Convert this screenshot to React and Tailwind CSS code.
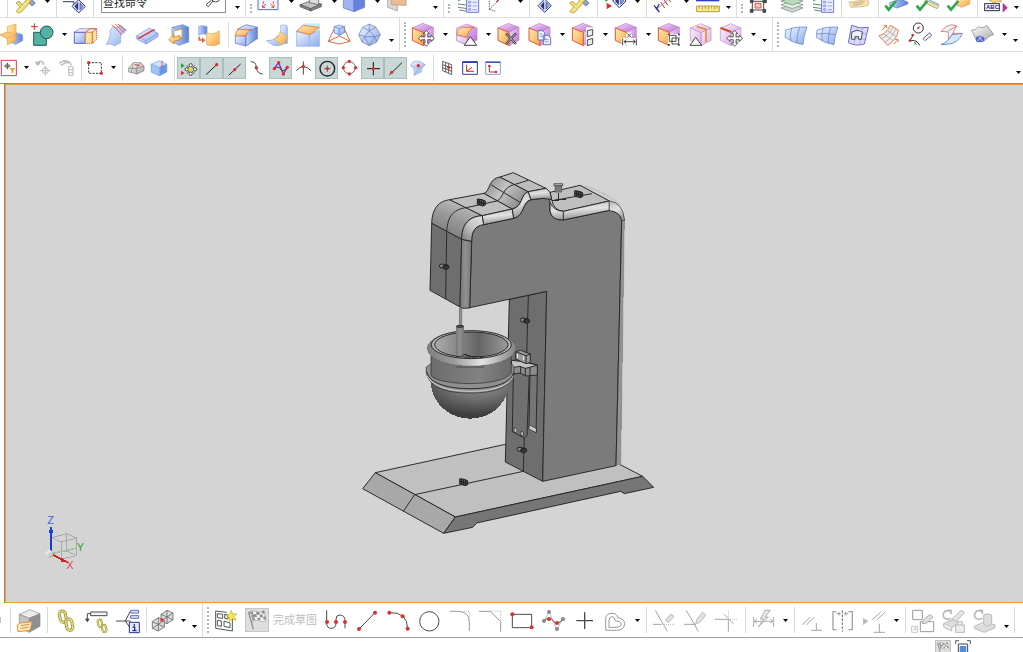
// App.jsx
const DARK = '#2b2b2b';
const ICON = '#4a4a4a';
const FADED = '#b9b9b9';

/* ---------- shared gradients ---------- */

function Gradients() {
  return (
    <svg className="absolute" width="0" height="0" aria-hidden="true">
      <defs>
        <linearGradient id="blue" x1="0" y1="0" x2="1" y2="1">
          <stop offset="0" stopColor="#eef5ff" />
          <stop offset="1" stopColor="#90abea" />
        </linearGradient>
        <linearGradient id="deep" x1="0" y1="0" x2="1" y2="0">
          <stop offset="0" stopColor="#c3d8fa" />
          <stop offset="1" stopColor="#5f7fd8" />
        </linearGradient>
        <linearGradient id="orange" x1="0" y1="0" x2="1" y2="1">
          <stop offset="0" stopColor="#ffeeb4" />
          <stop offset="1" stopColor="#f4a548" />
        </linearGradient>
        <linearGradient id="lilac" x1="0" y1="0" x2="1" y2="1">
          <stop offset="0" stopColor="#f6e2fb" />
          <stop offset="1" stopColor="#b468d4" />
        </linearGradient>
        <linearGradient id="pale" x1="0" y1="0" x2="1" y2="1">
          <stop offset="0" stopColor="#fbeefb" />
          <stop offset="1" stopColor="#d9b3e2" />
        </linearGradient>
        <linearGradient id="silver" x1="0" y1="0" x2="1" y2="1">
          <stop offset="0" stopColor="#ffffff" />
          <stop offset="1" stopColor="#a6a6a6" />
        </linearGradient>
        <linearGradient id="head" x1="0" y1="1" x2="0.5" y2="0">
          <stop offset="0" stopColor="#727272" />
          <stop offset="0.6" stopColor="#989898" />
          <stop offset="1" stopColor="#bdbdbd" />
        </linearGradient>
        <linearGradient id="fillet" x1="0" y1="0" x2="0.2" y2="1">
          <stop offset="0" stopColor="#b8b8b8" />
          <stop offset="0.5" stopColor="#e2e2e2" />
          <stop offset="1" stopColor="#979797" />
        </linearGradient>
        <linearGradient id="corner" x1="0" y1="1" x2="0.8" y2="0">
          <stop offset="0" stopColor="#7c7c7c" />
          <stop offset="0.55" stopColor="#c2c2c2" />
          <stop offset="1" stopColor="#e0e0e0" />
        </linearGradient>
        <linearGradient id="edge" x1="0" y1="0" x2="1" y2="0">
          <stop offset="0" stopColor="#7a7a7a" />
          <stop offset="0.5" stopColor="#909090" />
          <stop offset="1" stopColor="#777777" />
        </linearGradient>
        <linearGradient id="rise" x1="0" y1="0" x2="1" y2="0.6">
          <stop offset="0" stopColor="#7d7d7d" />
          <stop offset="0.5" stopColor="#c4c4c4" />
          <stop offset="1" stopColor="#8a8a8a" />
        </linearGradient>
        <linearGradient id="rim" x1="0" y1="0" x2="1" y2="0">
          <stop offset="0" stopColor="#7e7e7e" />
          <stop offset="0.3" stopColor="#9c9c9c" />
          <stop offset="0.62" stopColor="#e4e4e4" />
          <stop offset="1" stopColor="#858585" />
        </linearGradient>
        <linearGradient id="inside" x1="0" y1="0" x2="1" y2="0">
          <stop offset="0" stopColor="#aaaaaa" />
          <stop offset="0.3" stopColor="#8a8a8a" />
          <stop offset="0.6" stopColor="#646464" />
          <stop offset="1" stopColor="#9a9a9a" />
        </linearGradient>
        <linearGradient id="wall" x1="0" y1="0" x2="1" y2="0">
          <stop offset="0" stopColor="#6c6c6c" />
          <stop offset="0.6" stopColor="#828282" />
          <stop offset="1" stopColor="#6a6a6a" />
        </linearGradient>
        <radialGradient id="bowl" cx="0.6" cy="0.1" r="0.9">
          <stop offset="0" stopColor="#949494" />
          <stop offset="0.45" stopColor="#707070" />
          <stop offset="0.9" stopColor="#3e3e3e" />
        </radialGradient>
      </defs>
    </svg>
  );
}

/* ---------- toolbar parts ---------- */

// art is drawn on a grid of three units to the pixel
function Tool({ label, x, y, children }) {
  return (
    <button type="button" title={label} aria-label={label} className="block w-[31px] shrink-0 hover:bg-gray-100">
      <svg width="31" height="33" viewBox={`${x} ${y} 93 99`} fill="none" strokeWidth="3" stroke={ICON}>
        {children}
      </svg>
    </button>
  );
}

function NarrowTool({ label, x, y, children }) {
  return (
    <button type="button" title={label} aria-label={label} className="block w-7 shrink-0 hover:bg-gray-100">
      <svg width="28" height="33" viewBox={`${x} ${y} 84 99`} fill="none" strokeWidth="3" stroke={ICON}>
        {children}
      </svg>
    </button>
  );
}

function CutTool({ label, x, children }) {
  return (
    <button type="button" title={label} aria-label={label} className="block w-[31px] shrink-0">
      <svg width="31" height="17" viewBox={`${x} 0 93 51`} fill="none" strokeWidth="3" stroke={ICON}>
        {children}
      </svg>
    </button>
  );
}

function SnapTool({ label, x, on, children }) {
  return (
    <button
      type="button"
      title={label}
      aria-label={label}
      aria-pressed={!!on}
      className={on ? 'block w-[23px] shrink-0 bg-[#c9d8d6] ring-1 ring-inset ring-[#a9bfbc]' : 'block w-[23px] shrink-0'}
    >
      <svg width="23" height="22" viewBox={`${x} 171 69 66`} fill="none" strokeWidth="3" stroke={ICON}>
        {children}
      </svg>
    </button>
  );
}

function Triangle() {
  return (
    <svg width="5" height="3" viewBox="0 0 5 3">
      <path d="M0 0H5L2.5 3Z" fill="#000" />
    </svg>
  );
}

function Caret({ top }) {
  return (
    <button
      type="button"
      aria-label="More"
      className={top ? 'flex w-3 shrink-0 justify-center self-start' : 'flex w-3 shrink-0 justify-center'}
    >
      <Triangle />
    </button>
  );
}

function LowCaret({ className = 'pt-3' }) {
  return (
    <button type="button" aria-label="Toolbar options" className={`flex w-[10px] shrink-0 justify-center ${className}`}>
      <Triangle />
    </button>
  );
}

function Sep() {
  return (
    <span className="flex h-full max-h-[26px] w-1.5 shrink-0 justify-center">
      <span className="w-px bg-[#d9d9d9]" />
    </span>
  );
}

function Grip() {
  return (
    <span className="flex w-3 shrink-0 items-center gap-1 self-stretch pl-[3px]">
      <span className="w-px self-stretch bg-[#dcdcdc]" />
      <span className="my-1 w-0 self-stretch border-l-2 border-dotted border-[#b5b5b5]" />
    </span>
  );
}

/* ---------- reusable drawings ---------- */

function Dot({ x, y, r = 6 }) {
  return <circle cx={x} cy={y} r={r} fill="#d93030" stroke="none" />;
}

function PurpleCube({ x }) {
  return (
    <g transform={`translate(${x} 0)`} stroke="#c877c4" strokeWidth="2">
      <path d="M0 84 31 70 63 82 33 97Z" fill="url(#lilac)" />
      <path d="M33 97 63 82V121L33 137Z" fill="url(#lilac)" />
      <path d="M0 84 33 97V137L0 121Z" fill="url(#orange)" stroke="#e8553a" strokeWidth="3" />
    </g>
  );
}

function PaleCube({ x }) {
  return (
    <g transform={`translate(${x} 0)`} stroke="#b98cc9" strokeWidth="2">
      <path d="M0 84 31 71 62 84 32 98Z" fill="url(#pale)" />
      <path d="M32 98 62 84V121L32 137Z" fill="url(#pale)" />
      <path d="M0 84 32 98V137L0 121Z" fill="url(#pale)" />
    </g>
  );
}

function MoveArrows({ x, y }) {
  return (
    <path
      transform={`translate(${x} ${y})`}
      d="M0-24 9-14H4V-4H14V-9L24 0 14 9V4H4V14H9L0 24-9 14H-4V4H-14V9L-24 0-14-9V-4H-4V-14H-9Z"
      fill="#fff"
      stroke="#444"
      strokeWidth="2.5"
    />
  );
}

function Check({ x }) {
  return <path d={`M${x} 17 ${x + 10} 29 ${x + 32} 3`} stroke="#2fa84c" strokeWidth="8" />;
}

function Diamond({ x, y }) {
  return (
    <g transform={`translate(${x} ${y})`} stroke="#28357f">
      <path d="M-20 0 0-20 20 0 0 20Z" fill="#dfe6fb" />
      <path d="M-2-12V12L-12 0Z" fill="#28357f" strokeWidth="1" />
      <path d="M4-10 13 0 4 10Z" fill="#8ea5e5" strokeWidth="2" />
    </g>
  );
}

function Spanner({ x }) {
  return (
    <g transform={`translate(${x} 0)`}>
      <path d="M26-4 48 18 58 10 44-6Z" fill="#8ea2cf" stroke="#4c5f93" strokeWidth="2" />
      <path d="M0 34 26 6 34-6 50-6 36 14 14 38 5 38Z" fill="#f1dc70" stroke="#a8902d" strokeWidth="2" />
      <path d="M0 8 10 4 22 18 14 24Z" fill="#f1dc70" stroke="#a8902d" strokeWidth="2" />
      <path d="M8 32 32 6" stroke="#fdf5bf" strokeWidth="3" />
    </g>
  );
}

function ListPage({ x }) {
  return (
    <g transform={`translate(${x} 0)`}>
      <path d="M0 2 16-4 30 2M0 12 30 16M0 22 30 26M4 30 28 34" stroke="#6c8276" />
      <path d="M26-4H62V37H26Z" fill="#e9edff" stroke="#6a78d8" />
      <path d="M32 4H38V9H32ZM32 15H38V20H32ZM32 26H38V31H32ZM44 7H57M44 18H57M44 29H57" stroke="#6a78d8" strokeWidth="2" />
    </g>
  );
}

function Chain({ x, y, s = 1 }) {
  return (
    <g transform={`translate(${x} ${y}) scale(${s})`}>
      <rect x="-16" y="-30" width="18" height="34" rx="9" transform="rotate(-12)" stroke="#8c8230" strokeWidth="9" />
      <rect x="-16" y="-30" width="18" height="34" rx="9" transform="rotate(-12)" stroke="#e3da77" strokeWidth="5" />
      <rect x="-2" y="-2" width="18" height="34" rx="9" transform="rotate(-12)" stroke="#8c8230" strokeWidth="9" />
      <rect x="-2" y="-2" width="18" height="34" rx="9" transform="rotate(-12)" stroke="#e3da77" strokeWidth="5" />
    </g>
  );
}

function WireCube({ x, y }) {
  return (
    <g transform={`translate(${x} ${y})`} stroke="#6a6a6a" strokeWidth="2.5">
      <path d="M0 12 18 0 36 8V28L18 40 0 32Z" fill="#dcdcdc" />
      <path d="M0 12 18 20 36 8M18 20V40M18 0V20L0 32M18 20 36 28" />
    </g>
  );
}

function CheckeredFlag({ x, y }) {
  return (
    <g transform={`translate(${x} ${y})`} stroke="none">
      <path d="M0 4Q12-4 22 3T46 0L52 30Q40 36 30 30T8 34Z" fill="#f6f6f6" stroke="#9b9b9b" strokeWidth="2" />
      <path
        d="M4 5 12 1 14 9 6 12ZM22 3 32 5 33 13 24 12ZM40 2 46 0 48 8 41 10ZM14 10 23 11 25 20 16 18ZM33 13 41 10 43 19 35 21ZM8 14 14 11 16 19 9 21ZM25 21 34 21 36 29 28 27ZM43 19 50 17 52 25 45 27ZM10 22 17 19 19 28 12 30Z"
        fill="#8d8d8d"
      />
      <path d="M0 4 14 56" stroke="#8d8d8d" strokeWidth="4" />
    </g>
  );
}

/* ---------- top rows ---------- */

function MenuRow() {
  return (
    <div className="flex h-[18px] items-end overflow-hidden border-b border-[#dedede] pl-1">
      <Sep />
      <CutTool label="Customize" x={30}><Spanner x={48} /></CutTool>
      <Caret top />
      <Sep />
      <CutTool label="Repeat Command" x={177}>
        <path d="M189 5H222V22" stroke="#28357f" />
        <Diamond x={236} y={19} />
      </CutTool>
      <Sep />
      <div className="relative mb-1.5 ml-[5px] h-[22px] w-[125px] shrink-0">
        <input
          aria-label="查找命令"
          defaultValue="查找命令"
          className="h-full w-full border border-[#8c8c8c] bg-white pl-px text-[11px] text-[#222] outline-none font-['Noto_Sans_CJK_SC',sans-serif]"
        />
        <svg className="absolute right-1 bottom-0.5" width="17" height="17" viewBox="0 0 51 51" fill="none" stroke={ICON} strokeWidth="3">
          <circle cx="32" cy="18" r="12" />
          <path d="M24 27 10 44 3 38 20 24" />
        </svg>
      </div>
      <LowCaret className="ml-1.5 pb-2" />
      <Grip />
      <CutTool label="Fit" x={12}>
        <path d="M24-20H84V29H24Z" fill="#f2f5ff" stroke="#5a6ec6" />
        <path d="M48 12 38 22M38 14V22H46M62 12 72 22M72 14V22H64M40 4V11M70 4V11" stroke="#e04a2a" strokeWidth="3" />
      </CutTool>
      <Caret top />
      <CutTool label="Shade" x={141}>
        <path d="M150 14 180 4 214 12 182 26Z" fill="#c4c4c4" strokeWidth="2" />
        <path d="M150 14 182 26V33L150 20ZM182 26 214 12V20L182 33Z" fill="#888" strokeWidth="2" />
        <path d="M178-10V8L206 14V-10Z" fill="#dcdcdc" strokeWidth="2" />
      </CutTool>
      <Caret top />
      <CutTool label="View Section" x={270}>
        <path d="M280-10H312V35L280 24Z" fill="#9fb4f0" stroke="#5e74cc" strokeWidth="2" />
        <path d="M312-10H344V22L312 35Z" fill="#6782dc" stroke="#5e74cc" strokeWidth="2" />
      </CutTool>
      <Caret top />
      <CutTool label="Clip Plane" x={399}>
        <path d="M413-10V22L442 33V-10Z" fill="#d8d8d8" stroke="#b0b0b0" />
        <path d="M424-10V14L468 16V-10Z" fill="#e9bd94" stroke="#d0a075" />
      </CutTool>
      <LowCaret className="ml-4 pb-2" />
      <Grip />
      <CutTool label="Layer Settings" x={606}><ListPage x={624} /></CutTool>
      <CutTool label="WCS" x={699}>
        <path d="M718 28V-4M718 28 744 2M718 28 736 34" stroke="#777" strokeDasharray="5 2" />
        <path d="M740 6 748-4" stroke="#cf2c2c" strokeWidth="4" />
      </CutTool>
      <Caret top />
      <Sep />
      <CutTool label="Edit Object" x={66}><Diamond x={104} y={17} /></CutTool>
      <CutTool label="Preferences" x={159}><Spanner x={179} /></CutTool>
      <Sep />
      <CutTool label="Play" x={270}>
        <path d="M290 8V28L306 18Z" fill="#d93030" stroke="none" />
        <path d="M286-8V6L298-2Z" fill="#2fa84c" stroke="none" />
        <Diamond x={328} y={3} />
      </CutTool>
      <Caret top />
      <Sep />
      <CutTool label="Measure Distance" x={417}>
        <path d="M440 28 482-8" stroke="#999" />
        <path d="M432 16 448 36M448 12 438 28" stroke="#28357f" strokeWidth="4" />
        <path d="M452 6 464 24M462 0 474 16M472-8 482 6" stroke="#d93030" />
      </CutTool>
      <Caret top />
      <CutTool label="Ruler" x={546}>
        <path d="M558 2H628" stroke="#2b3fc0" strokeWidth="4" />
        <path d="M560 18H628V35H560Z" fill="#fbe98d" stroke="#b89b3a" />
        <path d="M568 20V26M577 20V29M586 20V26M595 20V29M604 20V26M613 20V29M621 20V26" stroke="#8a742a" strokeWidth="2" />
      </CutTool>
      <LowCaret className="pb-2" />
      <Grip />
      <CutTool label="Show and Hide" x={-54}>
        <path d="M-32 4H2V30H-32Z" />
        <path d="M-24 10H-6V24H-24Z" fill="#f9c7b4" stroke="#d9563a" />
        <path d="M-38 28H-30V37H-38ZM0 28H8V37H0ZM0 0H10V8H0ZM-38 0H-30V8H-38Z" fill={ICON} />
      </CutTool>
      <CutTool label="Layers" x={39}>
        <g stroke="#6c8276" strokeWidth="2">
          <path d="M54 24 88 14 120 24 88 37Z" fill="#cfd8d2" />
          <path d="M54 14 88 4 120 14 88 26Z" fill="#e6ece8" />
          <path d="M54 3 88-7 120 3 88 15Z" fill="#b7dcb9" />
        </g>
      </CutTool>
      <CutTool label="Layer Category" x={132}><ListPage x={150} /></CutTool>
      <Sep />
      <CutTool label="Note" x={243}>
        <path d="M258 6 314-2 318 14 300 20 264 22Z" fill="#f8e5ae" stroke="#c5b070" strokeWidth="2" />
        <path d="M268 10 304 5M270 16 300 11" stroke="#a88" strokeWidth="2" />
      </CutTool>
      <Sep />
      <CutTool label="Check Part" x={354}>
        <path d="M380 8 412-2 434 6V12L402 24 380 16Z" fill="url(#deep)" stroke="#4f6fc8" strokeWidth="2" />
        <Check x={367} />
      </CutTool>
      <CutTool label="Check Curve" x={447}>
        <path d="M488 0 528 18 522 26 484 8Z" fill="#f4e29c" stroke="#8f8f6a" strokeWidth="2" />
        <path d="M490-4 528 14" stroke="#4aa5c8" />
        <Check x={461} />
      </CutTool>
      <CutTool label="Check Body" x={540}>
        <path d="M582-8H620V12L596 22 582 16Z" fill="url(#orange)" stroke="#d39a3a" strokeWidth="2" />
        <Check x={554} />
      </CutTool>
      <Sep />
      <CutTool label="PMI Text" x={651}>
        <path d="M678 0 706-4 716 4 690 8Z" fill="#f5d77d" stroke="#b29a55" strokeWidth="2" />
        <rect x="665" y="11" width="44" height="21" fill="#fff" stroke="#28285a" />
        <text x="669" y="28" fontSize="18" fontWeight="700" fill="#28285a" stroke="none" fontFamily="Liberation Sans, sans-serif">ABC</text>
        <path d="M719 8V38L734 23Z" fill="#b4339c" stroke="none" />
      </CutTool>
      <LowCaret className="pb-2" />
    </div>
  );
}

function FeatureRow() {
  return (
    <div className="-ml-1 flex h-[34px] items-center overflow-hidden border-b border-[#dedede]">
      <Tool label="Datum Plane" x={-12} y={54}>
        <path d="M30 104 50 98 68 104V122L46 134 30 124Z" fill="url(#deep)" stroke="#7fa4e6" strokeWidth="2" />
        <path d="M22 80 48 72V122L22 134Z" fill="url(#orange)" stroke="#e69a48" strokeWidth="2" />
        <path d="M-2 104 24 96 46 104 20 116Z" fill="#fbc978" stroke="#e69a48" strokeWidth="2" />
      </Tool>
      <Tool label="Sketch" x={81} y={54}>
        <path d="M101 97H139V136H101Z" fill="#52b3a4" stroke="#245c54" />
        <circle cx="140" cy="97" r="19" fill="#52b3a4" stroke="#245c54" />
        <path d="M103 70V90M93 80H113" stroke="#d93030" />
      </Tool>
      <Caret />
      <Tool label="Extrude" x={210} y={54}>
        <path d="M223 97 238 86H290L276 97Z" fill="#f7e8e8" stroke="#6a78d8" strokeWidth="2" />
        <path d="M223 97H256V130H223Z" fill="url(#blue)" stroke="#5a62e0" />
        <path d="M256 97H277V130H256ZM277 97 290 86V118L277 130Z" fill="#fbe3a0" stroke="#e0653e" strokeDasharray="4 2" />
        <path d="M256 97 270 86H290" stroke="#e0653e" />
      </Tool>
      <Tool label="Swept Surface" x={303} y={54}>
        <path d="M338 80Q352 88 362 76L380 90Q356 100 362 128L342 138Q336 128 318 134 334 110 330 92Z" fill="url(#blue)" stroke="#86a2dc" strokeWidth="2" />
        <path d="M336 74 366 104M346 72 374 100M354 72 376 92" stroke="#d93030" strokeWidth="2.5" />
      </Tool>
      <Tool label="Trim Body" x={396} y={54}>
        <path d="M409 108 448 84 474 100V110L438 132 409 116Z" fill="url(#blue)" stroke="#6f8be4" strokeWidth="2" />
        <path d="M409 108 438 122 474 100M438 122V132" stroke="#6f8be4" strokeWidth="2" />
        <path d="M414 116 464 88" stroke="#d93030" strokeWidth="4" />
      </Tool>
      <Tool label="Boolean" x={489} y={54}>
        <path d="M516 82 548 74 566 82V126L536 136 516 124Z" fill="url(#deep)" stroke="#5f86c4" strokeWidth="2" />
        <path d="M516 82 540 90 566 82" stroke="#5f86c4" strokeWidth="2" />
        <path d="M522 92 546 88V112L522 118Z" fill="#fff" stroke="#e0a43a" />
        <path d="M506 120 520 104V112L540 106V120L522 124V132Z" fill="url(#orange)" stroke="#c9762a" strokeWidth="2" />
      </Tool>
      <Tool label="Move Face" x={582} y={54}>
        <path d="M596 80Q608 74 621 80V104Q608 98 596 106Z" fill="url(#deep)" stroke="#7a9be0" strokeWidth="2" />
        <path d="M620 98Q640 106 658 92V132Q640 142 620 134Z" fill="url(#orange)" stroke="#e5a558" strokeWidth="2" />
        <path d="M598 110V120H608" stroke="#e0653e" strokeWidth="5" />
        <path d="M606 112 616 121 606 130Z" fill="#e0653e" stroke="none" />
      </Tool>
      <Sep />
      <Tool label="Edge Blend" x={693} y={54}>
        <path d="M706 106 738 108V138L706 130Z" fill="url(#blue)" stroke="#5568d2" strokeWidth="2" />
        <path d="M738 104 772 82V116L738 138Z" fill="url(#deep)" stroke="#5568d2" strokeWidth="2" />
        <path d="M712 88 738 74 772 82 745 94Z" fill="url(#blue)" stroke="#5568d2" strokeWidth="2" />
        <path d="M706 108Q708 90 718 88L756 90Q740 92 738 108Z" fill="url(#orange)" stroke="#d9563a" strokeWidth="2" />
      </Tool>
      <Tool label="Bend" x={36} y={54}>
        <path d="M92 76Q114 72 112 84V130H104Q108 104 92 100Z" fill="url(#blue)" stroke="#86a2dc" strokeWidth="2" />
        <path d="M50 122Q76 122 82 106L110 128Q90 140 70 136Z" fill="url(#blue)" stroke="#86a2dc" strokeWidth="2" />
        <path d="M72 118Q86 116 90 96L112 108Q108 130 94 134Z" fill="url(#orange)" stroke="#e5a558" strokeWidth="2" />
      </Tool>
      <Tool label="Draft" x={129} y={54}>
        <path d="M138 70H210V138H138Z" fill="#c8eef5" stroke="none" />
        <path d="M138 70H160L140 92H138Z" fill="#fff" stroke="none" />
        <path d="M140 94 178 104V139H140ZM178 104 208 92V139H178Z" fill="url(#blue)" stroke="#9ab2e8" strokeWidth="2" />
        <path d="M140 94 160 76 208 82 180 104Z" fill="url(#orange)" stroke="#e06040" strokeWidth="2" />
      </Tool>
      <Tool label="Shell" x={222} y={54}>
        <path d="M235 124 254 84M300 124 282 84M235 124 268 108 300 124 268 132Z" stroke="#e0653e" />
        <path d="M252 80 268 75 284 80V98L268 106 252 98Z" fill="url(#blue)" stroke="#4c74c8" strokeWidth="2" />
        <path d="M252 80 268 86 284 80M268 86V106" stroke="#4c74c8" strokeWidth="2" />
      </Tool>
      <Tool label="Facet Body" x={315} y={54}>
        <path d="M358 72 378 82 391 104 380 126 358 137 336 126 326 104 338 82Z" fill="url(#blue)" stroke="#6079b8" strokeWidth="2" />
        <path d="M358 72V92M338 82 358 92 378 82M326 104 344 110 358 92 374 110 391 104M344 110 358 137 374 110ZM336 126 344 110M380 126 374 110" stroke="#6079b8" strokeWidth="2" />
      </Tool>
      <LowCaret />
      <Grip />
      <Tool label="Move Region" x={474} y={54}><PurpleCube x={487} /><MoveArrows x={529} y={115} /></Tool>
      <Caret />
      <Tool label="Offset Region" x={603} y={54}>
        <path d="M620 84 650 72 681 84V120L652 136 620 122Z" fill="url(#lilac)" stroke="#c877c4" strokeWidth="2" />
        <path d="M620 104Q622 84 640 82L672 82Q656 88 652 108V112Z" fill="url(#orange)" stroke="#d9563a" strokeWidth="2" />
        <path d="M620 106 652 114V136L620 122Z" fill="url(#pale)" stroke="#b98cc9" strokeWidth="2" />
        <path d="M661 110 680 136H643Z" fill="#fff" stroke="#444" />
      </Tool>
      <Caret />
      <Tool label="Delete Face" x={-48} y={54}>
        <PurpleCube x={-36} />
        <path d="M-12 100 18 132M18 100-12 132" stroke="#444" strokeWidth="7" />
        <path d="M-11 101 17 131M17 101-11 131" stroke="#eee" strokeWidth="2" />
      </Tool>
      <Tool label="Copy Face" x={45} y={54}>
        <PurpleCube x={57} />
        <path d="M84 92H98L104 98V120H84ZM100 106H114L122 113V134H100Z" fill="#eef1ff" stroke="#6079b8" />
        <path d="M89 102H98M89 109H98M105 118H116M105 125H116" stroke="#6079b8" strokeWidth="2" />
      </Tool>
      <Caret />
      <Tool label="Resize Face" x={174} y={54}>
        <PurpleCube x={187} />
        <path d="M228 82H256V140H228Z" fill="#fff" stroke="none" />
        <path d="M232 92 248 88V106L232 110ZM232 120 248 115V132L232 137Z" fill="#e6f1ea" />
      </Tool>
      <Caret />
      <Tool label="Linear Dimension" x={303} y={54}>
        <PurpleCube x={316} />
        <path d="M334 114H384V137H334Z" fill="#fff" stroke="none" />
        <path d="M348 98H366V114H348Z" fill="#fff" stroke="none" />
        <path d="M351 100 364 113M364 100 351 113M338 116V136M379 116V136M342 125H376M349 119 342 125 349 131M369 119 376 125 369 131" stroke="#444" />
      </Tool>
      <Caret />
      <Tool label="Group Face" x={432} y={54}>
        <PurpleCube x={445} />
        <path d="M474 102H508V136H474Z" fill="#fff" stroke="none" />
        <path d="M478 106H498V124H478ZM486 114H506V132H486Z" />
        <path d="M474 101H479V106H474ZM504 101H509V106H504ZM474 132H479V137H474ZM504 132H509V137H504Z" fill="#28357f" stroke="none" />
      </Tool>
      <Tool label="Edit Section" x={525} y={54}>
        <PaleCube x={541} />
        <path d="M560 80 588 88V126" stroke="#ee8a3c" strokeWidth="5" />
        <path d="M557 112 575 136H540Z" fill="#fff" stroke="#444" />
      </Tool>
      <Tool label="Move Edge" x={618} y={54}>
        <PaleCube x={631} />
        <path d="M632 84 664 96" stroke="#c9502f" strokeWidth="6" />
        <MoveArrows x={674} y={115} />
      </Tool>
      <Caret />
      <LowCaret />
      <Grip />
      <Tool label="Through Curves" x={54} y={54}>
        <path d="M68 90Q98 78 132 81Q122 106 120 134Q92 130 66 112Z" fill="url(#blue)" stroke="#5b78c8" strokeWidth="2" />
        <path d="M86 84Q80 104 84 124M110 82Q100 108 102 130" stroke="#5b78c8" strokeWidth="2" />
      </Tool>
      <Tool label="Through Curve Mesh" x={147} y={54}>
        <path d="M162 90Q192 78 225 81Q215 106 213 134Q184 130 160 112Z" fill="url(#blue)" stroke="#5b78c8" strokeWidth="2" />
        <path d="M180 84Q174 104 178 124M203 82Q194 108 196 130M161 102Q190 98 219 104" stroke="#5b78c8" strokeWidth="2" />
      </Tool>
      <Tool label="N-Sided Surface" x={240} y={54}>
        <path d="M266 76Q290 88 316 82L304 132Q280 140 256 128Z" fill="#d9dcf8" stroke="#7468d8" />
        <path d="M284 80 272 132M300 82 290 134M262 94 310 102M260 112 306 118" stroke="#9a92e6" strokeWidth="2" />
        <path d="M266 98Q280 86 298 96L295 118H287V110H276V118H266Z" fill="#f0f2fb" stroke="#333" strokeWidth="2.5" />
      </Tool>
      <Tool label="Flow Blend" x={333} y={54}>
        <path d="M348 108Q372 100 382 76L406 90Q404 116 374 136Z" fill="#f0eeee" stroke="#e0653e" strokeWidth="2.5" />
        <path d="M356 116Q380 104 390 80M366 126Q390 112 398 86M362 102 390 122M374 92 400 110" stroke="#9a9a9a" strokeWidth="2" />
        <path d="M356 90 370 78M362 76H371V84M392 132 404 120M396 118H405V126" stroke="#d9762a" />
      </Tool>
      <Tool label="Studio Surface" x={426} y={54}>
        <circle cx="466" cy="84" r="15" stroke="#333" />
        <path d="M462 88 472 78" stroke="#cf2c2c" />
        <path d="M442 122Q462 118 470 136M450 106 442 120" stroke="#333" />
        <Dot x={449} y={105} r={4} /><Dot x={441} y={122} r={4} /><Dot x={466} y={84} r={3} />
        <path d="M454 126 460 134M460 126 454 134" stroke="#2fa84c" />
        <path d="M480 116 500 98 506 106 486 122Z" fill="#fff7d0" stroke="#5560cf" />
      </Tool>
      <Tool label="Section Surface" x={519} y={54}>
        <path d="M534 94Q548 76 566 74L582 78Q570 90 568 118L556 122V96Z" fill="#e6f4f4" stroke="#dd6b7a" strokeWidth="2.5" />
        <path d="M534 134Q556 126 566 104L598 100Q586 128 560 132Z" fill="#d5e9f5" stroke="#4f7fc0" strokeWidth="2.5" />
        <path d="M556 92 582 78M568 100 596 100" stroke="#dd6b7a" strokeWidth="2.5" />
      </Tool>
      <Tool label="Surface Fit" x={612} y={54}>
        <path d="M626 90Q638 92 646 80 656 88 672 76L692 104Q676 106 670 118 660 112 642 126Z" fill="url(#silver)" stroke="#7a7a7a" strokeWidth="2" />
        <path d="M640 112Q662 102 664 122 650 128 642 124Z" fill="#5a6fe0" stroke="#2c3fae" strokeWidth="2" />
        <path d="M646 110 660 124M656 108 644 124" stroke="#fff" strokeWidth="2" />
      </Tool>
      <Caret />
      <LowCaret />
    </div>
  );
}

function SnapRow() {
  return (
    <div className="-ml-[3px] flex h-8 items-center border-b border-[#8c8c8c]">
      <SnapTool label="Type Filter" x={-9}>
        <path d="M4 181H49V227H4Z" stroke="#d23c50" />
        <path d="M22 188V208M12 198H32" stroke="#555" /><circle cx="22" cy="198" r="6" stroke="#555" strokeWidth="2" />
        <path d="M28 204H46L40 212V220H35V212Z" fill="#f0a030" stroke="none" />
      </SnapTool>
      <Caret />
      <SnapTool label="Reset Filters" x={96}>
        <g stroke={FADED}><circle cx="136" cy="212" r="9" /><path d="M136 196V227M121 212H152" /><path d="M112 192Q118 178 130 188V194M108 184 112 194 120 190" strokeWidth="5" /></g>
      </SnapTool>
      <SnapTool label="Deselect All" x={165}>
        <g stroke={FADED} strokeWidth="4"><path d="M178 190 192 182 206 190M182 196 198 188" /><path d="M206 200V226M219 200V226M206 200H219M206 209H219M206 218H219M206 226H219" strokeWidth="3" /><path d="M190 184Q208 178 214 196" /></g>
      </SnapTool>
      <Sep />
      <SnapTool label="Rectangle Select" x={252}>
        <path d="M266 188H304V220H266Z" stroke="#333" strokeDasharray="6 4" />
        <Dot x={266} y={188} r={5} /><Dot x={304} y={220} r={5} />
      </SnapTool>
      <Caret />
      <Sep />
      <SnapTool label="Wireframe" x={375}>
        <path d="M386 204 400 188 422 188 432 198V212L412 222 386 216Z" fill="url(#silver)" stroke="#777" strokeWidth="2" />
        <path d="M386 204 408 206 432 198M408 206 412 222M400 188 394 216M408 206 422 188" stroke="#777" strokeWidth="2" />
        <path d="M404 194 418 196" stroke="#cf2c2c" />
      </SnapTool>
      <SnapTool label="Shaded" x={444}>
        <path d="M454 192 478 182 500 192V216L478 227 454 216Z" fill="#cfe2fb" stroke="#7aa6e6" strokeWidth="2" />
        <path d="M478 202 500 192V216L478 227Z" fill="#6f93e8" stroke="#7aa6e6" strokeWidth="2" />
        <path d="M454 192 478 202V227L454 216Z" fill="#a5c3f4" stroke="#7aa6e6" strokeWidth="2" />
        <path d="M486 182V204" stroke="#cf5c7c" />
      </SnapTool>
      <Sep />
      <SnapTool label="Enable Snap Point" x={531} on>
        <path d="M543 190V204L554 197Z" fill="#1f9a3c" stroke="none" /><path d="M543 212V226L554 219Z" fill="#d93030" stroke="none" />
        <path d="M560 196 584 221M584 196 560 221" stroke="#222" strokeWidth="2" />
        <g stroke="#222" fill="#fff" strokeWidth="2.5"><circle cx="572" cy="196" r="5" /><circle cx="572" cy="221" r="5" /><circle cx="560" cy="208" r="5" /><circle cx="585" cy="208" r="5" /></g>
        <circle cx="572" cy="208" r="6" fill="#f2d43c" stroke="none" />
      </SnapTool>
      <SnapTool label="End Point" x={600} on><path d="M618 224 650 194" stroke="#222" /><Dot x={650} y={194} r={5} /></SnapTool>
      <SnapTool label="Mid Point" x={669} on><path d="M686 226 722 192" stroke="#222" /><Dot x={704} y={209} r={5} /></SnapTool>
      <SnapTool label="Control Point" x={-12}><path d="M2 185Q18 184 19 202T38 222" /><Dot x={19} y={203} r={5} /></SnapTool>
      <SnapTool label="Pole" x={57} on>
        <path d="M72 206 86 188 100 222 112 202" stroke="#8b2fc0" strokeWidth="4" /><path d="M72 206Q86 196 92 208T112 202" stroke="#333" />
        <Dot x={73} y={206} r={5} /><Dot x={86} y={188} r={5} /><Dot x={100} y={222} r={5} /><Dot x={112} y={202} r={5} />
      </SnapTool>
      <SnapTool label="Intersection" x={126}><path d="M160 184V224M139 212Q160 188 183 212" /><Dot x={160} y={199} r={5} /></SnapTool>
      <SnapTool label="Arc Center" x={195} on><circle cx="232" cy="206" r="22" stroke="#222" strokeWidth="4" /><path d="M222 206H242M232 196V216" stroke="#777" /><Dot x={232} y={206} r={5} /></SnapTool>
      <SnapTool label="Quadrant" x={264}>
        <circle cx="298" cy="203" r="18" strokeWidth="2.5" />
        <Dot x={298} y={184} r={5} /><Dot x={298} y={222} r={5} /><Dot x={280} y={203} r={5} /><Dot x={317} y={203} r={5} />
      </SnapTool>
      <SnapTool label="Existing Point" x={333} on><path d="M370 186V226M351 206H390" stroke="#111" /><Dot x={370} y={206} r={5} /></SnapTool>
      <SnapTool label="Point on Curve" x={402} on><path d="M418 225 456 188" stroke="#222" /><Dot x={425} y={217} r={5} /></SnapTool>
      <SnapTool label="Point on Face" x={471}>
        <path d="M482 196Q488 180 508 184L526 194Q514 200 514 216L492 226Q496 204 482 196Z" fill="url(#blue)" stroke="#86b0d8" strokeWidth="2" />
        <path d="M482 196 506 206 526 194M506 206Q500 214 492 226" stroke="#86b0d8" strokeWidth="2" />
        <Dot x={505} y={197} r={5} />
      </SnapTool>
      <Sep />
      <SnapTool label="Grid Point" x={558}>
        <path d="M578 184 605 194V224L578 212ZM578 194 605 204M578 203 605 214M587 188V216M596 191V220" stroke="#444" strokeWidth="2.5" /><Dot x={596} y={202} r={5} />
      </SnapTool>
      <SnapTool label="Set WCS" x={627}>
        <path d="M638 185H682V223H638Z" fill="#fff" stroke="#2b3fa0" /><path d="M638 187H682" stroke="#2b3fa0" strokeWidth="4" />
        <path d="M650 194V214H672M650 214 666 202" stroke="#cf2c2c" />
      </SnapTool>
      <SnapTool label="WCS Origin" x={696}>
        <path d="M707 185H751V223H707Z" fill="#fff" stroke="#8f9fdf" /><path d="M707 187H751" stroke="#4458b8" strokeWidth="4" />
        <path d="M718 198V216H738" stroke="#cf2c2c" /><Dot x={718} y={198} r={4} /><Dot x={738} y={216} r={4} />
      </SnapTool>
      <LowCaret className="ml-auto pt-2.5" />
    </div>
  );
}

/* ---------- graphics window ---------- */

function Bolt({ x, y }) {
  return (
    <g transform={`translate(${x} ${y})`} stroke="#1e1e1e" strokeWidth="3">
      <path d="M-12-10V6L4 11 12 8V-4L2-8Z" fill="#5a5a5a" />
      <path d="M-6-9V7M0-8V9M6-6V10M-12-2 12 4" />
    </g>
  );
}

function SideBolt({ x, y }) {
  return (
    <g transform={`translate(${x} ${y})`} stroke="#1e1e1e" strokeWidth="3">
      <ellipse cx="-6" cy="-1" rx="9" ry="6" fill="#888" />
      <ellipse cx="5" cy="2" rx="9" ry="7" fill="#3a3a3a" />
      <path d="M-4 3 8-5" />
    </g>
  );
}

function Mixer() {
  return (
    <g transform="translate(350 165) scale(0.33333)" stroke={DARK} strokeWidth="3" fill="none" strokeLinejoin="round">
      {/* base */}
      <path d="M76 923 466 838 600 810 807 897 878 934 316 1056Z" fill="#c0c0c0" />
      <path d="M76 923 316 1056 281 1105 38 971Z" fill="#a8a8a8" />
      <path d="M194 989 160 1039M194 989 520 919" />
      <path d="M316 1056 878 934 911 967 823 986 812 979 380 1074 368 1087 281 1105Z" fill="#767676" />
      <Bolt x={341} y={951} />

      {/* column */}
      <path d="M478 403 590 379 578 949 466 891 475 520Z" fill="#6e6e6e" />
      <path d="M535 391 520 919" />
      <SideBolt x={525} y={466} />
      <SideBolt x={516} y={854} />

      {/* bowl carrier */}
      <path d="M490 630 487 800 523 819 531 812 538 620" fill="#707070" />
      <path d="M562 628 558 802 537 790 540 628Z" fill="#757575" />
      <path d="M538 780 559 791V803L537 792Z" fill="#d0d0d0" strokeWidth="2" />
      <path d="M493 788V800L500 803V792ZM513 799V811L520 813V802Z" fill="#d8d8d8" strokeWidth="2" />
      <path d="M484 588 500 584 562 600V630L528 633 510 624 486 628Z" fill="#8c8c8c" />
      <path d="M484 586 520 590 562 601 526 610 510 604 486 608Z" fill="#c4c4c4" />
      <path d="M526 610V632M540 608V632M512 606V626" />
      <path d="M497 560 512 556 541 567V592L528 596 497 582Z" fill="#9b9b9b" />
      <path d="M497 560 528 572 541 567M528 572V596" />
      <path d="M503 568V578M521 574V584" stroke="#e8e8e8" strokeWidth="4" />

      {/* head top */}
      <path d="M245 175C246 128 268 108 299 104L397 152C350 155 336 185 335 223Z" fill="url(#head)" />
      <path d="M299 104 402 85 487 132 397 152Z" fill="#bfbfbf" />
      <path d="M402 85C420 80 415 40 450 36L535 80C510 88 520 125 487 132Z" fill="url(#rise)" />
      <path d="M450 36 490 23 588 70 535 80Z" fill="#bdbdbd" />
      <path d="M712 64Q780 88 810 118L778 108 690 61Z" fill="#cdcdcd" strokeWidth="1" stroke="#9a9a9a" />
      <path d="M600 82 690 61 778 108 640 139Q612 136 606 108Z" fill="#bfbfbf" />
      <path d="M290 200C292 150 315 132 349 128L440 108C462 100 455 66 495 58L535 46M424 60 510 112M606 107 726 86" />

      {/* head side */}
      <path d="M245 175 335 223 330 426 240 376Z" fill="#6e6e6e" />
      <path d="M290 200 287 402" />
      <path
        d="M365 229C365 200 375 182 401 179L491 160C525 152 516 108 545 104L580 100Q600 96 600 112V138Q606 166 640 165L778 136Q812 142 815 168L798 902 578 949 590 379 359 428Z"
        fill="#7b7b7b"
      />
      <path d="M815 166H824L813 898 798 902Z" fill="#929292" strokeWidth="1" stroke="#929292" />
      <path d="M815 166 798 902" />
      <path d="M335 223 365 229 359 429 338 430 330 426Z" fill="url(#edge)" />
      <path d="M335 223C336 185 350 155 397 152L401 179C375 182 365 200 365 229Z" fill="url(#corner)" />
      <path d="M397 152 487 132 491 160 401 179Z" fill="url(#fillet)" />
      <path d="M487 132C520 125 510 88 535 80L543 104C516 108 525 152 491 160Z" fill="url(#fillet)" />
      <path d="M535 80 588 70Q604 80 604 104L580 100 543 104Z" fill="url(#fillet)" />
      <path d="M600 112Q612 138 640 139L778 108V136L640 165Q604 166 600 138Z" fill="url(#fillet)" />
      <path d="M640 139V165" />
      <path d="M778 108Q818 112 824 166H815Q812 142 778 136Z" fill="url(#fillet)" strokeWidth="2" />
      <Bolt x={394} y={112} />
      <Bolt x={686} y={87} />
      <SideBolt x={283} y={304} />
      <path d="M625 84V106M606 107 648 102" strokeWidth="4" />
      <path d="M615 62H635V82H615Z" fill="#7b7b7b" strokeWidth="1" />
      <path d="M612 56H638V62H612Z" fill="#b5b5b5" strokeWidth="2" />

      {/* bowl */}
      <path d="M243 640V664C254 724 305 761 361 761S466 724 478 664V640Z" fill="url(#bowl)" stroke="none" />
      <path d="M229 606V624C238 668 290 684 361 684S484 668 492 624V606L484 596H243Z" fill="#8f8f8f" strokeWidth="2" />
      <path d="M232 632C244 664 300 679 361 679S480 664 490 632" stroke="#d0d0d0" />
      <path d="M231 622C240 658 300 671 361 671S482 658 491 622" />
      <path d="M243 560V632C268 662 452 668 484 624V560Z" fill="url(#wall)" strokeWidth="2" />
      <path d="M318 606H402" stroke="#4a4a4a" />
      <ellipse cx="364" cy="550" rx="133" ry="53" fill="url(#rim)" strokeWidth="1" stroke="#6a6a6a" />
      <ellipse cx="364" cy="539" rx="120" ry="42" strokeWidth="3" fill="#b5b5b5" />
      <ellipse cx="364" cy="539" rx="110" ry="38" fill="url(#inside)" />
      <path d="M318 574 345 568 360 574 400 576" strokeWidth="4" />

      {/* whisk shaft */}
      <path d="M328 430H336V484H328Z" fill="#8d8d8d" strokeWidth="1" stroke="#666" />
      <path d="M319 484H341L339 570Q328 576 318 570Z" fill="url(#edge)" strokeWidth="1" stroke="#777" />
      <ellipse cx="330" cy="484" rx="11" ry="3" fill="#555" />
    </g>
  );
}

function Triad() {
  return (
    <g transform="translate(30 505) scale(0.33333)" fill="none" strokeWidth="3">
      <path d="M66 98 110 86 140 99V152L95 162 66 144ZM66 98 95 111 140 99M95 111V162M110 86V138L66 144M110 138 140 152" stroke="#a9a9a9" />
      <path d="M72 144 138 130" stroke="#9fc6a2" strokeWidth="5" />
      <path d="M63 142V72" stroke="#1240e0" strokeWidth="5" />
      <path d="M63 60 70 84H56Z" fill="#1240e0" />
      <path d="M66 149 100 166" stroke="#d42020" strokeWidth="5" />
      <path d="M116 174 92 170 98 159Z" fill="#d42020" />
      <circle cx="59" cy="147" r="11" fill="url(#silver)" />
      <g fontFamily="Liberation Sans, sans-serif" fontSize="33" stroke="none">
        <text x="52" y="58" fill="#3a62e8">Z</text>
        <text x="140" y="139" fill="#34a040">Y</text>
        <text x="109" y="193" fill="#e04848">X</text>
      </g>
    </g>
  );
}

function GraphicsWindow() {
  return (
    <main className="ml-1 flex min-h-0 flex-1 border-l border-[#8c8c8c]">
      <div className="relative flex-1 border-y border-l border-[#f39a3d] bg-[#d4d4d4]">
        <svg
          className="absolute inset-0 h-full w-full"
          viewBox="6 85 1017 517"
          shapeRendering="crispEdges"
          role="img"
          aria-label="Stand mixer model"
        >
          <Mixer />
          <Triad />
        </svg>
      </div>
    </main>
  );
}

/* ---------- bottom rows ---------- */

function SketchRow() {
  return (
    <div className="flex h-[34px] items-center overflow-hidden">
      <span className="mr-1.5 h-1.5 w-px shrink-0 bg-[#c4c4c4]" />
      <Sep />
      <Tool label="Part Properties" x={39} y={21}>
        <path d="M58 52 90 38 120 50 88 64Z" fill="#ececec" stroke="#8a8a8a" strokeWidth="2" />
        <path d="M58 52 88 64V106L58 92Z" fill="#c4c4c4" stroke="#8a8a8a" strokeWidth="2" />
        <path d="M88 64 120 50V88L88 106Z" fill="#8f8f8f" stroke="#8a8a8a" strokeWidth="2" />
        <path d="M52 84 60 78 96 74 90 100 54 104Z" fill="#ffe9b5" stroke="#ee8f3a" />
        <path d="M62 86 88 82M62 94 86 90" stroke="#a66a2c" strokeWidth="2" />
      </Tool>
      <Sep />
      <Tool label="Interpart Link" x={150} y={21}><Chain x={198} y={70} /></Tool>
      <Tool label="Link Browser" x={243} y={21}>
        <path d="M272 45H321V56H272Z" fill="#f4f4f4" /><path d="M272 50H262V68" /><path d="M257 66 262 74 267 66Z" fill={ICON} />
        <Chain x={306} y={86} s={0.65} />
      </Tool>
      <Tool label="Relations" x={336} y={21}>
        <path d="M348 72H392M376 72 390 44H394M376 72 390 92" />
        <path d="M392 40H416V48H392ZM392 56H416V64H392Z" fill="#dfe5fb" stroke="#5a6ec6" />
        <path d="M388 76H418V107H388Z" fill="#e6eaff" stroke="#28308f" />
        <path d="M403 81V86M398 90H404V100M397 101H410" stroke="#28308f" strokeWidth="4" />
      </Tool>
      <Sep />
      <NarrowTool label="Assembly" x={447} y={21}>
        <WireCube x={483} y={40} /><WireCube x={457} y={62} /><path d="M481 64H490V74H481Z" fill="#e04040" stroke="none" />
      </NarrowTool>
      <Caret />
      <LowCaret />
      <Grip />
      <NarrowTool label="Direct Sketch" x={633} y={21}>
        <path d="M647 42 680 46M647 42V94L697 102V66M652 50 668 52V64L652 62ZM674 52 684 54V66L674 64ZM652 70 664 72V88L652 86ZM672 72 690 78V92L672 88Z" stroke="#4d5a4f" />
        <path d="M694 40 698 52 710 50 702 59 709 70 697 65 688 74 688 61 677 56 689 53Z" fill="#f7e74e" stroke="#c9a820" strokeWidth="2" />
      </NarrowTool>
      <button type="button" disabled className="ml-1.5 flex shrink-0 items-center gap-1">
        <span className="h-6 w-6 border border-[#c6c6c6] bg-[#dedede]">
          <svg width="22" height="22" viewBox="-12 39 66 66" fill="none">
            <CheckeredFlag x={-4} y={44} />
          </svg>
        </span>
        <span className="pb-0.5 text-[11px] leading-4 whitespace-nowrap text-[#bdbdbd] font-['Noto_Sans_CJK_SC',sans-serif]">完成草图</span>
      </button>
      <span className="w-1 shrink-0" />
      <Tool label="Profile" x={213} y={21}>
        <path d="M230 40V78Q230 94 244 94T258 78V66Q258 54 270 54T285 68V94" />
        <Dot x={231} y={75} /><Dot x={258} y={75} /><Dot x={285} y={75} />
      </Tool>
      <Tool label="Line" x={306} y={21}><path d="M327 96 375 47" /><Dot x={327} y={96} /><Dot x={375} y={47} /></Tool>
      <Tool label="Arc" x={399} y={21}><path d="M418 47Q472 44 473 95" /><Dot x={418} y={47} /><Dot x={458} y={58} /><Dot x={473} y={95} /></Tool>
      <Tool label="Circle" x={492} y={21}><circle cx="538" cy="73" r="29" /></Tool>
      <Tool label="Fillet" x={585} y={21}><g stroke={FADED}><path d="M600 43H624Q658 44 658 76V102" stroke="#999" /><path d="M630 43H658V70" strokeDasharray="3 3" /></g></Tool>
      <Tool label="Chamfer" x={678} y={21}><g stroke={FADED}><path d="M687 43H722L752 74V104" stroke="#999" /><path d="M722 42H752V74" strokeDasharray="3 3" /></g></Tool>
      <Tool label="Rectangle" x={21} y={21}><path d="M37 52H95V92H37Z" /><Dot x={37} y={52} /><Dot x={95} y={91} /></Tool>
      <Tool label="Studio Spline" x={114} y={21}>
        <path d="M132 72 147 45 170 96 189 66" stroke="#999" strokeWidth="2" /><path d="M132 72Q148 56 160 72T189 66" />
        <g fill="#888" stroke="none"><circle cx="132" cy="72" r="6" /><circle cx="147" cy="45" r="6" /><circle cx="171" cy="96" r="6" /><circle cx="189" cy="66" r="6" /></g>
        <Dot x={147} y={66} /><Dot x={171} y={78} />
      </Tool>
      <Tool label="Point" x={207} y={21}><path d="M254 46V96M229 71H279" strokeWidth="4" /></Tool>
      <Tool label="Offset Curve" x={300} y={21}>
        <g stroke="#9a9a9a"><path d="M317 100V64Q318 49 336 49 350 49 354 62 374 66 374 80 372 100 350 100Z" /><path d="M327 91V70Q328 59 337 59 345 60 346 72 363 72 364 82 362 91 348 91Z" /></g>
      </Tool>
      <Caret />
      <Sep />
      <Tool label="Quick Trim" x={447} y={21}>
        <path d="M466 40 502 103M459 82H486" stroke="#a3a3a3" /><path d="M492 82H524" stroke={FADED} strokeDasharray="3 3" />
        <path d="M496 70 512 52 522 58 506 76Z" fill="#e3e3e3" stroke={FADED} />
      </Tool>
      <Tool label="Quick Extend" x={540} y={21}>
        <path d="M559 40 595 103M552 82H588" stroke="#a3a3a3" /><path d="M587 80 590 68 608 46 617 54 600 76Z" fill="#e3e3e3" stroke={FADED} />
      </Tool>
      <Tool label="Make Corner" x={633} y={21}>
        <path d="M645 67H685V104M672 52 700 80" stroke="#a3a3a3" /><path d="M685 40V62M690 67H712" stroke={FADED} strokeDasharray="3 3" />
      </Tool>
      <Sep />
      <Tool label="Rapid Dimension" x={-15} y={21}>
        <g stroke="#ababab"><path d="M2 60V90M62 60V90M4 73H60M12 67 4 73 12 79M52 67 60 73 52 79" /><path d="M36 40 22 66H32L16 90 46 60H36L52 40Z" fill="#e8e8e8" /></g>
      </Tool>
      <Caret />
      <Sep />
      <Tool label="Geometric Constraints" x={132} y={21}><path d="M148 84 172 60M160 84 184 60M174 100H207M190 78V100" stroke="#a3a3a3" /></Tool>
      <Tool label="Make Symmetric" x={225} y={21}>
        <path d="M250 44H240V98H250M286 44H298V98H286" stroke="#a3a3a3" strokeWidth="4" /><path d="M268 40V104" stroke="#666" strokeDasharray="8 4" />
        <path d="M250 50H262M286 50H274M256 45 262 50 256 55M280 45 274 50 280 55" stroke="#999" />
      </Tool>
      <Tool label="Display Constraints" x={318} y={21}>
        <path d="M330 62V84L346 73Z" fill={FADED} stroke="none" /><path d="M358 68 384 44M372 68 398 44M362 106H396M379 80V106" stroke="#a3a3a3" />
      </Tool>
      <Caret />
      <Sep />
      <Tool label="Convert To Reference" x={465} y={21}>
        <path d="M479 40H508V68H479ZM502 74H542V104H502Z" stroke="#999" />
        <path d="M476 88H494V106H476ZM481 101 489 93M483 93H489V99" stroke="#aaa" strokeWidth="2" />
        <path d="M508 80 512 68 532 52 540 60 522 78Z" fill="#ddd" stroke="#b0b0b0" />
      </Tool>
      <Tool label="Alternate Solution" x={558} y={21}>
        <g stroke={FADED}><path d="M592 44A13 13 0 1 0 594 62M582 40H594V52" strokeWidth="5" /><path d="M572 80 598 68 622 76 596 92Z" fill="#ddd" /><path d="M598 66 624 40 634 46 610 74Z" fill="#e6e6e6" /><path d="M572 80V90L596 102V92M608 84H634V106H608ZM614 84V74H628V84" fill="#eee" /></g>
      </Tool>
      <Tool label="Animate Dimension" x={651} y={21}>
        <g stroke={FADED}><path d="M686 44A13 13 0 1 0 688 62M676 40H688V52" strokeWidth="5" /><path d="M664 88 696 74 726 84 694 98Z" fill="#e4e4e4" /><path d="M664 88V94L694 106 726 92V84M692 54 704 50 716 54V82L704 88 692 82Z" fill="#ddd" /></g>
      </Tool>
      <LowCaret />
      <Sep />
    </div>
  );
}

function StatusBar() {
  return (
    <footer className="flex h-[15px] justify-end gap-1 overflow-hidden border-t border-[#a3a3a3] pt-0.5 pr-[52px]">
      <button type="button" aria-label="Finish sketch" className="h-4 w-4 border border-[#c0c0c0] bg-[#dedede]">
        <svg width="14" height="14" viewBox="-8 -4 66 66" fill="none"><CheckeredFlag x={0} y={2} /></svg>
      </button>
      <button type="button" aria-label="Full screen" className="h-4 w-4">
        <svg width="16" height="16" viewBox="0 0 48 48" fill="none">
          <path d="M2 12V2H12M36 2H46V12" stroke="#555" strokeWidth="3" />
          <path d="M10 12H38V42H10Z" fill="#fff" stroke="#444" strokeWidth="3" />
          <path d="M14 18H34V36H14Z" fill="#4f8fe0" />
        </svg>
      </button>
    </footer>
  );
}

export default function App() {
  return (
    <div className="flex h-screen flex-col overflow-hidden bg-white">
      <Gradients />
      <header>
        <MenuRow />
        <FeatureRow />
        <SnapRow />
      </header>
      <GraphicsWindow />
      <SketchRow />
      <StatusBar />
    </div>
  );
}
